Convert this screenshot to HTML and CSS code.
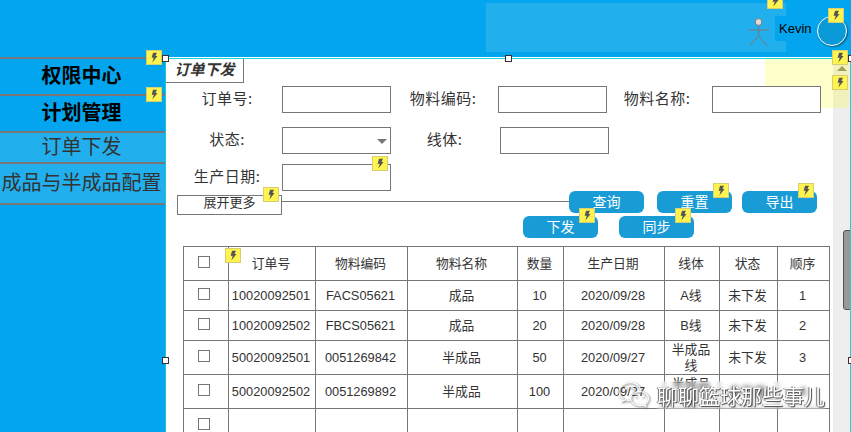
FILE: index.html
```html
<!DOCTYPE html>
<html lang="zh">
<head>
<meta charset="utf-8">
<title>订单下发</title>
<link rel="stylesheet" href="styles.css">
</head>
<body>
<svg class="defs" width="0" height="0"><symbol id="bolt" viewBox="0 0 14 14"><path d="M6 2h4.200L8.600 5.400h2.200L5.200 12.400l1.500-5H4.400z"/></symbol></svg>
<div class="page">
  <header class="topbar">
    <div class="userpanel">
      <svg class="person" width="21" height="28" viewBox="0 0 21 28"><circle cx="10.500" cy="4" r="3.400" fill="#ddd" stroke="#777" stroke-width="1"/><path d="M10.500 7.500v10M0 12h21M10.500 17.500L2 27.500M10.500 17.500l8.500 10" fill="none" stroke="#777" stroke-width="1"/></svg>
      <div class="username">Kevin</div>
    </div>
    <div class="avatar"></div>
  </header>
  <div class="layout">
    <nav class="sidebar">
      <div class="nav-item nav-head nav-a">权限中心</div>
      <div class="nav-item nav-head nav-b">计划管理</div>
      <div class="nav-item nav-sub nav-c">订单下发</div>
      <div class="nav-item nav-sub nav-d">成品与半成品配置</div>
    </nav>
    <main class="main">
      <div class="content">
        <div class="note"></div>
        <div class="tab">订单下发</div>
        <section class="filters">
          <div class="row row1">
            <label class="lbl l1">订单号:</label><div class="input"></div>
            <label class="lbl l2">物料编码:</label><div class="input"></div>
            <label class="lbl l3">物料名称:</label><div class="input"></div>
          </div>
          <div class="row row2">
            <label class="lbl l1">状态:</label><div class="input select"><span class="caret"></span></div>
            <label class="lbl l4">线体:</label><div class="input"></div>
          </div>
          <div class="row row3">
            <label class="lbl l1">生产日期:</label><div class="input"></div>
          </div>
        </section>
        <section class="toolbar">
          <div class="tool-a">
            <div class="more">展开更多</div>
            <div class="rule"></div>
            <div class="btn b-query">查询</div>
            <div class="btn b-reset">重置</div>
            <div class="btn b-export">导出</div>
          </div>
          <div class="tool-b">
            <div class="btn">下发</div>
            <div class="btn b-sync">同步</div>
          </div>
        </section>
        <table class="grid">
          <colgroup>
            <col class="c0"><col class="c1"><col class="c2"><col class="c3"><col class="c4"><col class="c5"><col class="c6"><col class="c7"><col class="c8">
          </colgroup>
          <tr class="r-head"><td><i class="check"></i></td><td>订单号</td><td>物料编码</td><td>物料名称</td><td>数量</td><td>生产日期</td><td>线体</td><td>状态</td><td>顺序</td></tr>
          <tr class="r-low"><td><i class="check"></i></td><td>10020092501</td><td>FACS05621</td><td>成品</td><td>10</td><td>2020/09/28</td><td>A线</td><td>未下发</td><td>1</td></tr>
          <tr class="r-low"><td><i class="check"></i></td><td>10020092502</td><td>FBCS05621</td><td>成品</td><td>20</td><td>2020/09/28</td><td>B线</td><td>未下发</td><td>2</td></tr>
          <tr class="r-tall"><td><i class="check"></i></td><td>50020092501</td><td>0051269842</td><td>半成品</td><td>50</td><td>2020/09/27</td><td class="wrap">半成品线</td><td>未下发</td><td>3</td></tr>
          <tr class="r-tall"><td><i class="check"></i></td><td>50020092502</td><td>0051269892</td><td>半成品</td><td>100</td><td>2020/09/27</td><td class="wrap">半成品线</td><td>未下发</td><td>4</td></tr>
          <tr class="r-tall"><td><i class="check"></i></td><td></td><td></td><td></td><td></td><td></td><td></td><td></td><td></td></tr>
        </table>
      </div>
      <aside class="scrollbar"><span class="up"></span><span class="thumb"></span></aside>
    </main>
  </div>

  <div class="select-top"></div>
  <div class="select-right"></div>
  <span class="handle h1"></span><span class="handle h2"></span><span class="handle h3"></span><span class="handle h4"></span><span class="handle h5"></span>

  <svg class="badge p1"><use href="#bolt"/></svg>
  <svg class="badge p2"><use href="#bolt"/></svg>
  <svg class="badge p3"><use href="#bolt"/></svg>
  <svg class="badge p4"><use href="#bolt"/></svg>
  <svg class="badge p5"><use href="#bolt"/></svg>
  <svg class="badge p6"><use href="#bolt"/></svg>
  <svg class="badge p7"><use href="#bolt"/></svg>
  <svg class="badge p8"><use href="#bolt"/></svg>
  <svg class="badge p9"><use href="#bolt"/></svg>
  <svg class="badge p10"><use href="#bolt"/></svg>
  <svg class="badge p11"><use href="#bolt"/></svg>
  <svg class="badge p12"><use href="#bolt"/></svg>
  <svg class="badge p13"><use href="#bolt"/></svg>

  <div class="watermark">
    <svg class="wechat" width="34" height="29" viewBox="0 0 34 28"><g fill="none" stroke="#fff" stroke-width="1.100"><path d="M13 2C7 2 2 6 2 11c0 3 1.600 5.400 4 7l-1 3 3.600-1.800c1.400.5 2.900.8 4.400.8"/><path d="M13 2c5.500 0 10 3.400 10.800 8"/><path d="M22.500 11c-5 0-9 3.200-9 7s4 7 9 7c1.200 0 2.300-.2 3.300-.5l3 1.500-.8-2.600c2.200-1.300 3.500-3.300 3.500-5.400 0-3.800-4-7-9-7z"/></g><g fill="#fff"><circle cx="9" cy="8" r="1"/><circle cx="16" cy="8" r="1"/><circle cx="19" cy="16" r=".9"/><circle cx="26" cy="16" r=".9"/></g></svg>
    <span class="wm-text">聊聊篮球那些事儿</span>
  </div>
</div>
</body>
</html>
```
FILE: styles.css
```css
html, body { margin: 0; padding: 0; background: #fff; }
body { font-family: "Liberation Sans", "Noto Sans CJK SC", sans-serif; color: #333; }
.defs { position: absolute; }
.page { position: relative; width: 851px; height: 432px; overflow: hidden; }

/* header */
.topbar { height: 57px; background: #03a6ee; display: flex; box-sizing: border-box; padding: 3px 0 0 486px; }
.userpanel { width: 300px; height: 49px; background: #22afee; display: flex; justify-content: flex-end; align-items: flex-start; box-sizing: border-box; padding-top: 13px; }
.person { margin: 2px 6px 0 0; }
.username { width: 7px; height: 25px; background: #03a6ee; line-height: 26px; font-size: 13px; color: #000; padding-left: 4px; white-space: nowrap; }
.avatar { width: 28px; height: 28px; margin: 13px 0 0 31px; border-radius: 50%; background: #0a9ad8; border: 1px solid #fff; box-shadow: 1px 1px 2px rgba(0,0,0,.45); }

/* layout */
.layout { display: grid; grid-template-columns: 165px 1fr; height: 375px; }
.sidebar { background: #03a6ee; }
.nav-item { box-sizing: border-box; border-top: 2px solid #777; text-align: center; white-space: nowrap; font-family: "Noto Sans CJK SC", sans-serif; font-size: 20px; }
.nav-head { color: #000; font-weight: 700; }
.nav-a { height: 37px; line-height: 32px; text-indent: -2px; }
.nav-b { height: 37px; line-height: 32px; text-indent: -2px; }
.nav-sub { background: #22afee; color: #333; font-weight: 400; }
.nav-c { height: 31px; line-height: 25px; text-indent: -2px; }
.nav-d { height: 43px; line-height: 36px; border-bottom: 2px solid #777; text-indent: -2px; }

/* main */
.main { display: flex; background: #fff; margin-top: 2px; border-left: 1px solid #17c9d6; }
.content { position: relative; width: 667px; flex: none; }
.note { position: absolute; left: 599px; top: 0; width: 84px; height: 49px; background: rgba(255,255,0,.2); z-index: 2; }
.tab { width: 78px; height: 24px; box-sizing: border-box; border-right: 1px solid #777; border-bottom: 1px solid #777; text-align: center; font: italic 700 15px/20px "Noto Sans CJK SC", sans-serif; color: #333; }

.filters { position: relative; z-index: 3; padding-top: 3px; }
.row { display: flex; height: 27px; padding-left: 6px; }
.row2 { margin-top: 14px; }
.row3 { margin-top: 10px; }
.lbl { flex: none; box-sizing: border-box; height: 27px; font: 400 15px/24px "Noto Sans CJK SC", sans-serif; letter-spacing: .5px; color: #333; text-align: center; }
.l1 { width: 110px; }
.l2 { width: 107px; padding-right: 3px; }
.l3 { width: 105px; padding-right: 5px; }
.l4 { width: 109px; padding-right: 2px; }
.input { position: relative; flex: none; width: 109px; height: 27px; box-sizing: border-box; border: 1px solid #777; background: #fff; }
.caret { position: absolute; right: 3px; top: 11px; border: 5px solid transparent; border-top: 5px solid #777; border-bottom: 0; }

.toolbar { position: relative; z-index: 3; }
.tool-a { display: flex; height: 22px; align-items: flex-start; padding-left: 11px; }
.more { flex: none; width: 105px; height: 20px; margin-top: 4px; box-sizing: border-box; border: 1px solid #777; background: #fff; text-align: center; font: 400 13px/11px "Noto Sans CJK SC", sans-serif; color: #333; }
.rule { flex: none; width: 287px; height: 1px; margin-top: 10px; background: #777; }
.btn { flex: none; width: 75px; height: 22px; border-radius: 6px; background: #199bd6; color: #fff; text-align: center; font: 400 14px/21px "Noto Sans CJK SC", sans-serif; }
.b-reset { margin-left: 13px; }
.b-export { margin-left: 10px; }
.tool-b { display: flex; margin-top: 3px; padding-left: 357px; }
.b-sync { margin-left: 21px; }

/* table */
.grid { margin: 8px 0 0 17px; width: 646px; table-layout: fixed; border-collapse: collapse; font-size: 12.800px; color: #333; }
.c0 { width: 45px; } .c1 { width: 87px; } .c2 { width: 92px; } .c3 { width: 110px; } .c4 { width: 46px; }
.c5 { width: 101px; } .c6 { width: 55px; } .c7 { width: 58px; } .c8 { width: 52px; }
.grid td { border: 1px solid #777; padding: 0 2px 0 0; text-align: center; vertical-align: middle; line-height: 16px; white-space: nowrap; overflow: hidden; }
.grid td.wrap { white-space: normal; padding: 0 7px 0 5px; }
.r-head td { height: 33px; }
.r-low td { height: 29px; }
.r-tall td { height: 33px; }
.check { display: block; width: 10px; height: 10px; border: 1px solid #777; margin: 0 auto; transform: translate(-1px, -2px); }

/* scrollbar */
.scrollbar { position: relative; flex: 1; background: #eee; }
.up { position: absolute; left: 4px; top: 7px; border: 5px solid transparent; border-bottom: 5px solid #8a8a70; border-top: 0; }
.thumb { position: absolute; left: 10px; top: 171px; width: 10px; height: 78px; background: #999; border: 1px solid #555; border-radius: 3px; }

/* canvas selection */
.select-top { position: absolute; left: 165px; top: 58px; width: 686px; height: 1px; background: #17d6d6; }
.select-right { position: absolute; left: 850px; top: 58px; width: 1px; height: 374px; background: #17d6d6; }
.handle { position: absolute; width: 5px; height: 5px; background: #fff; border: 1px solid #333; z-index: 6; }
.h1 { left: 162px; top: 55px; } .h2 { left: 505px; top: 55px; } .h3 { left: 848px; top: 55px; }
.h4 { left: 162px; top: 357px; } .h5 { left: 848px; top: 357px; }

/* interaction badges */
.badge { position: absolute; width: 14px; height: 13px; background: #fff44f; border: 1px solid #d5cf73; fill: #555; z-index: 7; }
.p1 { left: 146px; top: 50px; } .p2 { left: 146px; top: 87px; } .p3 { left: 372px; top: 156px; }
.p4 { left: 263px; top: 187px; } .p5 { left: 767px; top: -6px; } .p6 { left: 713px; top: 183px; }
.p7 { left: 798px; top: 183px; } .p8 { left: 579px; top: 208px; } .p9 { left: 675px; top: 208px; }
.p10 { left: 828px; top: 8px; } .p11 { left: 832px; top: 50px; } .p12 { left: 832px; top: 75px; }
.p13 { left: 225px; top: 248px; }

/* watermark */
.watermark { position: absolute; left: 617px; top: 380px; display: flex; align-items: center; gap: 6px; z-index: 8; }
.wechat { filter: drop-shadow(1px 1px 1px #555); }
.wm-text { font: 400 21px/28px "Noto Sans CJK SC", sans-serif; color: #fff; text-shadow: 1px 1px 1px #444, -1px 0 1px #666; white-space: nowrap; backdrop-filter: blur(2px); }
```
